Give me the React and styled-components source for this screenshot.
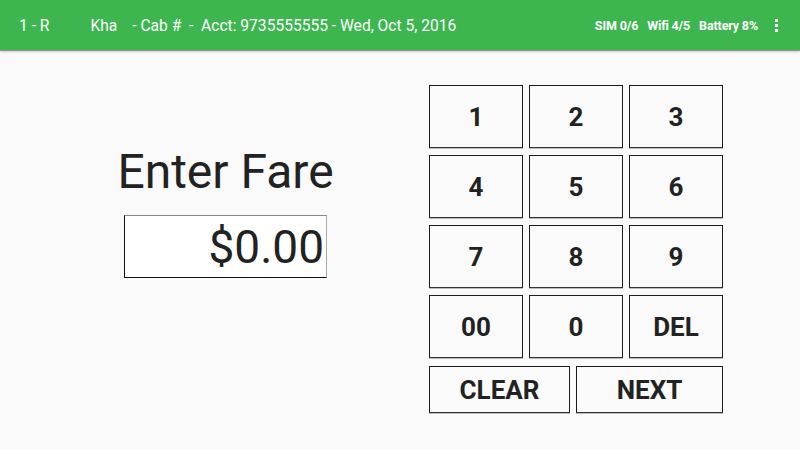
import React from "react";
import styled, { createGlobalStyle } from "styled-components";

const Global = createGlobalStyle`
  html, body { margin: 0; padding: 0; background: #fafafa; }
  body { font-family: Roboto, "Noto Sans", sans-serif; width: 800px; height: 449px; overflow: hidden; }
  * { box-sizing: border-box; }
`;

const Screen = styled.div`
  width: 800px;
  height: 449px;
  display: flex;
  flex-direction: column;
  background: #fafafa;
`;

const Header = styled.header`
  height: 50px;
  flex: none;
  background: #3db650;
  color: #fff;
  display: flex;
  align-items: center;
  padding: 1px 0 0 19px;
  box-shadow: 0 1px 1px rgba(0,0,0,0.35), 0 2px 3px rgba(0,0,0,0.12);
  position: relative;
  z-index: 1;
`;

const HeadText = styled.span`
  font-size: 15.6px;
  white-space: pre;
  margin-left: ${(p) => p.$ml || 0}px;
`;

const Status = styled.div`
  margin-left: auto;
  display: flex;
  align-items: center;
  gap: 9px;
  font-size: 12.5px;
  font-weight: 700;
  letter-spacing: -0.15px;
`;

const Dots = styled.div`
  display: flex;
  flex-direction: column;
  gap: 2px;
  margin: 0 22px 0 17px;
  & > span {
    width: 3px;
    height: 3px;
    background: #fff;
  }
`;

const Body = styled.main`
  flex: 1;
  display: flex;
`;

const Left = styled.section`
  width: 429px;
  display: flex;
  flex-direction: column;
  align-items: center;
  padding: 97px 0 0 22px;
`;

const Title = styled.h1`
  margin: 0;
  font-weight: 400;
  font-size: 48px;
  line-height: 50px;
  color: #222;
`;

const FareBox = styled.div`
  margin-top: 18px;
  width: 203px;
  height: 63px;
  border-style: solid;
  border-width: 1px;
  border-color: #888 #aaa #111 #111;
  background: #fff;
  display: flex;
  align-items: center;
  justify-content: flex-end;
  padding-right: 2px;
  overflow: hidden;
  font-size: 46px;
  color: #222;
  white-space: nowrap;
`;

const Pad = styled.section`
  padding-top: 35px;
  display: flex;
  flex-direction: column;
  gap: 8px;
`;

const Grid = styled.div`
  display: grid;
  grid-template-columns: repeat(3, 94px);
  grid-auto-rows: 63px;
  column-gap: 6px;
  row-gap: 7px;
`;

const Bottom = styled.div`
  display: grid;
  grid-template-columns: 141px 147px;
  column-gap: 6px;
  height: 47px;
`;

const Key = styled.button`
  margin: 0;
  padding: 0;
  background: #fafafa;
  border: 1px solid #1c1c1c;
  border-bottom-color: #333;
  box-shadow: 0 1px 0 rgba(0,0,0,0.25);
  font-family: Roboto, "Noto Sans", sans-serif;
  font-weight: 700;
  font-size: 26px;
  color: #222;
  display: flex;
  align-items: center;
  justify-content: center;
`;

const keys = ["1", "2", "3", "4", "5", "6", "7", "8", "9", "00", "0", "DEL"];

export default function App() {
  return (
    <Screen>
      <Global />
      <Header>
        <HeadText>1 - R</HeadText>
        <HeadText $ml={41}>Kha</HeadText>
        <HeadText $ml={15}>- Cab #  -  Acct: 9735555555 - Wed, Oct 5, 2016</HeadText>
        <Status>
          <span>SIM 0/6</span>
          <span>Wifi 4/5</span>
          <span>Battery 8%</span>
        </Status>
        <Dots>
          <span />
          <span />
          <span />
        </Dots>
      </Header>
      <Body>
        <Left>
          <Title>Enter Fare</Title>
          <FareBox>$0.00</FareBox>
        </Left>
        <Pad>
          <Grid>
            {keys.map((k) => (
              <Key key={k}>{k}</Key>
            ))}
          </Grid>
          <Bottom>
            <Key>CLEAR</Key>
            <Key>NEXT</Key>
          </Bottom>
        </Pad>
      </Body>
    </Screen>
  );
}
